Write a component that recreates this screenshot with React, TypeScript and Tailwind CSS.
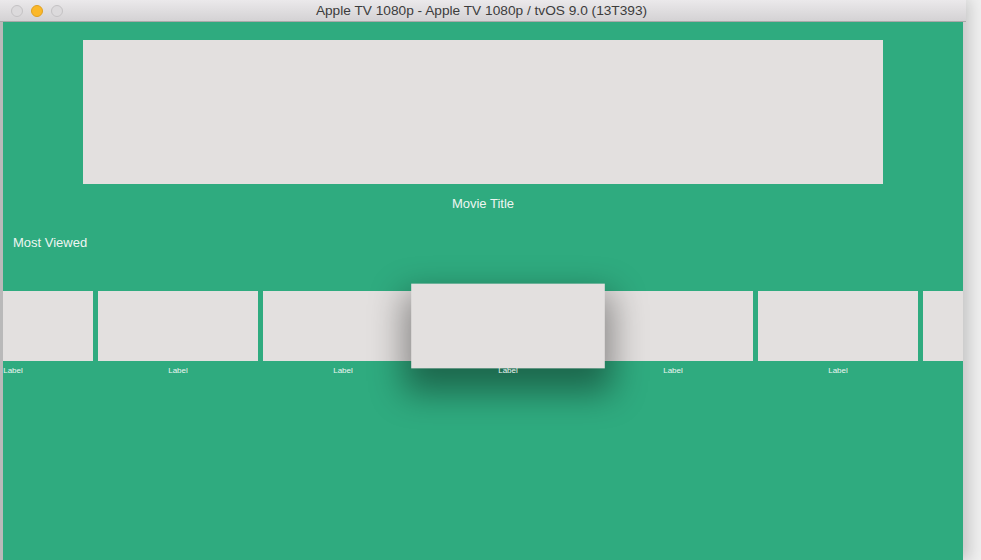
import React from 'react';

const cards = [0, 1, 2, 3, 4, 5, 6];

export default function App() {
  return (
    <div
      className="w-[981px] h-[560px] bg-[#efefef] flex overflow-hidden"
      style={{ fontFamily: '"Liberation Sans", Arial, sans-serif' }}
    >
      <div className="w-[963px] h-full flex flex-col border-l-[3px] border-[#b9b9b9] shadow-[6px_0_14px_rgba(0,0,0,0.18)]">
        {/* title bar */}
        <div className="h-[22px] -ml-[3px] w-[966px] flex items-center relative bg-gradient-to-b from-[#ebe9eb] to-[#d4d2d4] border-b border-[#a9a9a9]">
          <div className="flex items-center gap-[8px] pl-[11px] pt-[1px]">
            <div className="w-[12px] h-[12px] rounded-full bg-[#dcdadc] border border-[#c4c2c4]" />
            <div className="w-[12px] h-[12px] rounded-full bg-[#fbb829] border border-[#e0a020]" />
            <div className="w-[12px] h-[12px] rounded-full bg-[#dcdadc] border border-[#c4c2c4]" />
          </div>
          <div className="flex-1 text-center text-[13.7px] text-[#3c3c3c] -ml-[66px] pt-[1px]">
            Apple TV 1080p - Apple TV 1080p / tvOS 9.0 (13T393)
          </div>
        </div>

        {/* content */}
        <div className="flex-1 bg-[#2fab7f] flex flex-col overflow-hidden text-[#eef6f2]">
          <div className="w-[800px] h-[144px] mx-auto mt-[18px] bg-[#e3e0df]" />
          <div className="text-center text-[13px] leading-[15px] mt-[12px]">Movie Title</div>
          <div className="pl-[10px] text-[13px] leading-[15px] mt-[24px]">Most Viewed</div>
          <div className="flex gap-[5px] -ml-[70px] mt-[41px]">
            {cards.map((i) => (
              <div key={i} className="w-[160px] shrink-0 flex flex-col items-center">
                <div
                  className={
                    i === 3
                      ? 'w-[160px] h-[70px] bg-[#e3e0df] relative z-10 scale-x-[1.21] scale-y-[1.21] shadow-[0_14px_28px_6px_rgba(0,0,0,0.4)]'
                      : 'w-[160px] h-[70px] bg-[#e3e0df]'
                  }
                />
                {i < 6 && <div className="text-[8px] leading-[10px] mt-[5px] relative z-20">Label</div>}
              </div>
            ))}
          </div>
        </div>
      </div>
    </div>
  );
}
